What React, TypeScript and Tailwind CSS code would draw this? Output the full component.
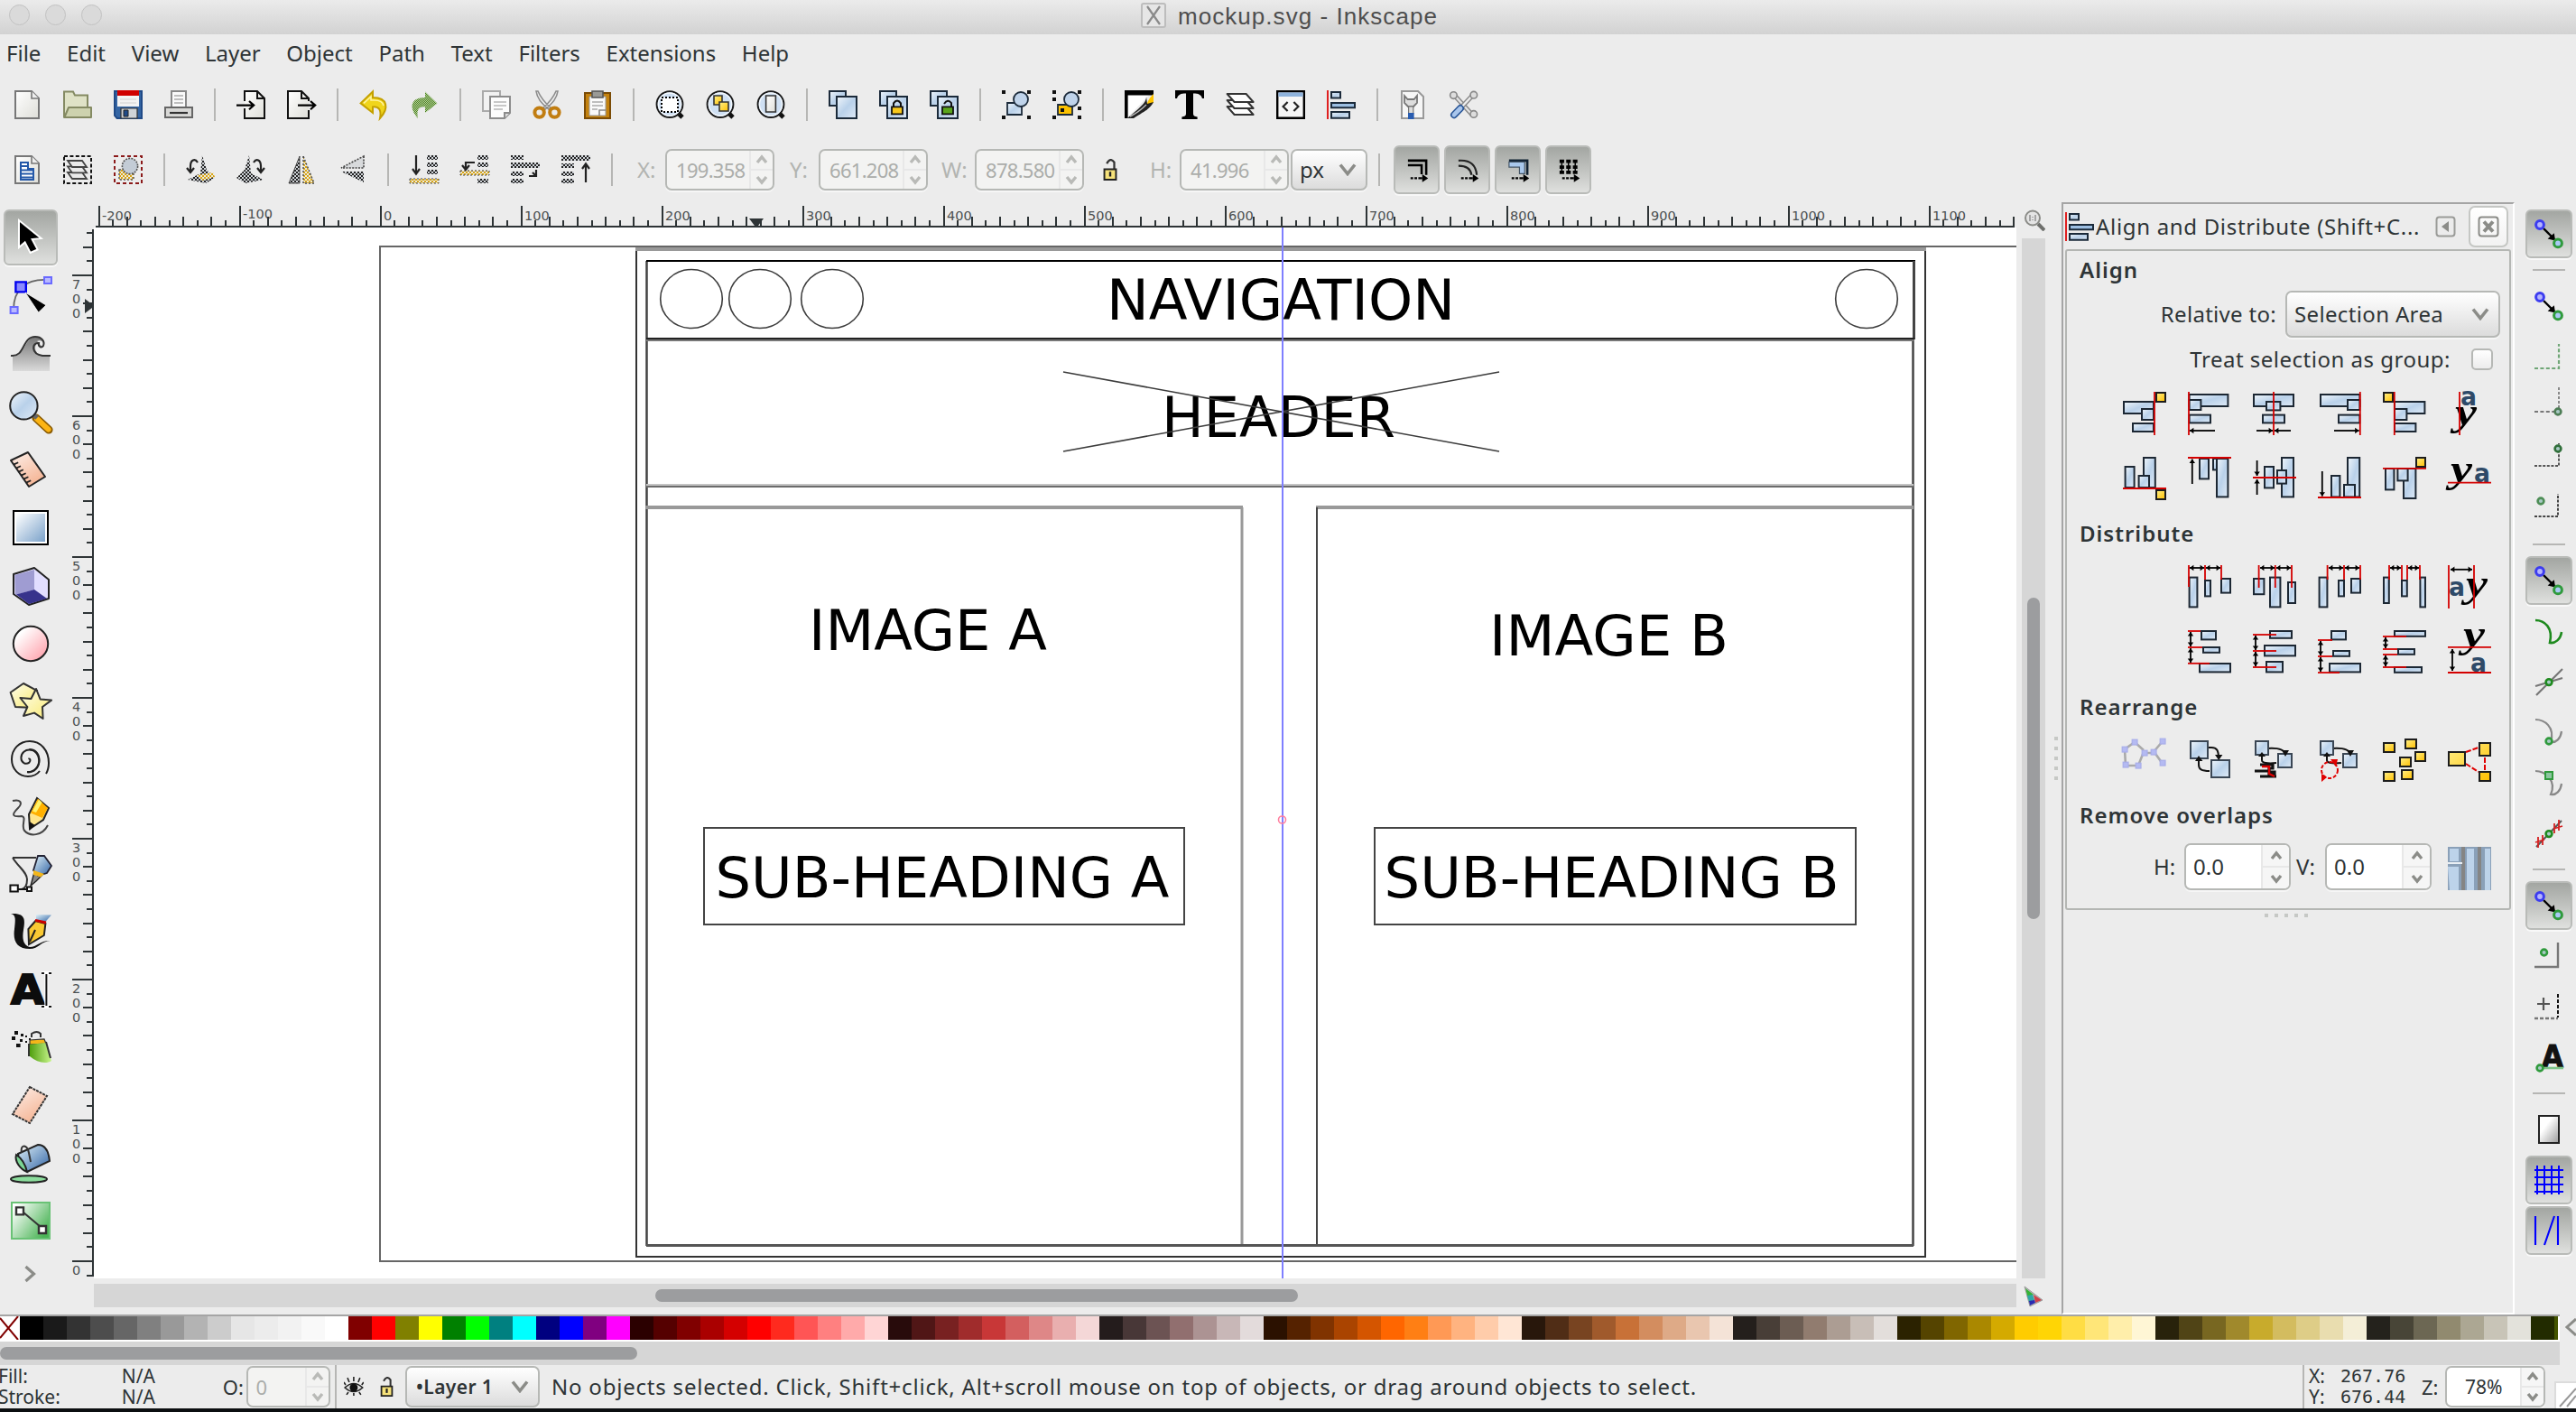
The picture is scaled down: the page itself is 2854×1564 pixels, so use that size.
import React from "react";

type Kids = { children?: React.ReactNode };

/* ---------- shared svg definitions ---------- */

function Defs() {
  return (
    <svg width="0" height="0" className="absolute">
      <defs>
        <linearGradient id="blue" x1="0" y1="0" x2="1" y2="1">
          <stop offset="0" stopColor="#f0f6fb" />
          <stop offset=".5" stopColor="#b9d1ea" />
          <stop offset="1" stopColor="#dfeaf6" />
        </linearGradient>
        <linearGradient id="rectg" x1="0" y1="0" x2="1" y2="1">
          <stop offset="0" stopColor="#ffffff" />
          <stop offset="1" stopColor="#7ba2ca" />
        </linearGradient>
        <linearGradient id="pink" x1="0" y1="0" x2="1" y2="1">
          <stop offset=".2" stopColor="#ffffff" />
          <stop offset="1" stopColor="#ff97a3" />
        </linearGradient>
        <linearGradient id="peach" x1="0" y1="0" x2=".6" y2="1">
          <stop offset="0" stopColor="#fdf0ea" />
          <stop offset="1" stopColor="#f5b595" />
        </linearGradient>
        <linearGradient id="gold" x1="0" y1="0" x2="1" y2="1">
          <stop offset="0" stopColor="#fff08a" />
          <stop offset="1" stopColor="#ffbf00" />
        </linearGradient>
        <linearGradient id="yel" x1="0" y1="0" x2="1" y2="1">
          <stop offset="0" stopColor="#fffff0" />
          <stop offset="1" stopColor="#f8e86e" />
        </linearGradient>
        <linearGradient id="paper" x1="0" y1="0" x2="1" y2="1">
          <stop offset="0" stopColor="#ffffff" />
          <stop offset="1" stopColor="#deded8" />
        </linearGradient>
        <linearGradient id="gry" x1="0" y1="0" x2="0" y2="1">
          <stop offset="0" stopColor="#777" />
          <stop offset="1" stopColor="#dadada" />
        </linearGradient>
        <linearGradient id="can" x1="0" y1="0" x2="1" y2="1">
          <stop offset="0" stopColor="#dff1f8" />
          <stop offset="1" stopColor="#2f62a4" />
        </linearGradient>
        <linearGradient id="grn" x1="0" y1="0" x2="1" y2="0">
          <stop offset="0" stopColor="#4c9c0a" />
          <stop offset="1" stopColor="#c8f58c" />
        </linearGradient>
        <linearGradient id="grad" x1="0" y1="0" x2="1" y2=".7">
          <stop offset=".1" stopColor="#ffffff" />
          <stop offset="1" stopColor="#4bb456" />
        </linearGradient>
        <linearGradient id="pageg" x1="0" y1="0" x2="1" y2="1">
          <stop offset=".35" stopColor="#fff" />
          <stop offset="1" stopColor="#9a9a9a" />
        </linearGradient>
        <pattern id="chk" width="2" height="2" patternUnits="userSpaceOnUse">
          <rect width="1" height="1" fill="#222" />
          <rect x="1" y="1" width="1" height="1" fill="#222" />
          <rect x="1" width="1" height="1" fill="#cfd3d8" />
          <rect y="1" width="1" height="1" fill="#cfd3d8" />
        </pattern>
        <pattern id="chkg" width="1" height="1" patternUnits="userSpaceOnUse">
          <rect width=".5" height=".5" fill="#4d7c1e" />
          <rect x=".5" y=".5" width=".5" height=".5" fill="#4d7c1e" />
          <rect x=".5" width=".5" height=".5" fill="#b5d6a0" />
          <rect y=".5" width=".5" height=".5" fill="#b5d6a0" />
        </pattern>
        <pattern id="chky" width="2" height="2" patternUnits="userSpaceOnUse">
          <rect width="1" height="1" fill="#d9a514" />
          <rect x="1" y="1" width="1" height="1" fill="#d9a514" />
          <rect x="1" width="1" height="1" fill="#eceae0" />
          <rect y="1" width="1" height="1" fill="#eceae0" />
        </pattern>
      </defs>
    </svg>
  );
}

function I16({ children }: Kids) {
  return (
    <svg viewBox="0 0 16 16" className="h-8 w-8 overflow-visible" fill="none">
      {children}
    </svg>
  );
}

function I24({ children }: Kids) {
  return (
    <svg viewBox="0 0 24 24" className="h-12 w-12 overflow-visible" fill="none">
      {children}
    </svg>
  );
}

/* ---------- command bar icons ---------- */

const Page = ({ stroke = "#777", x = 0 }) => (
  <>
    <path d={`M${x + 1.5} .5h9l4 4v11h-13z`} fill="url(#paper)" stroke={stroke} />
    <path d={`M${x + 10.5} .5v4h4`} fill="#eee" stroke={stroke} strokeWidth=".8" />
  </>
);

const Glass = ({ children }: Kids) => (
  <I16>
    <path d="M12 12l3 3" stroke="#111" strokeWidth="2.4" />
    <circle cx="8" cy="7.8" r="7.2" fill="#cfe0f3" stroke="#1a1a1a" />
    <circle cx="8" cy="7.8" r="6.3" stroke="#f2f7fc" strokeWidth=".7" />
    {children}
  </I16>
);

const Corners = () => (
  <path d="M0 0h2v2H0zM14 0h2v2h-2zM0 14h2v2H0zM14 14h2v2h-2z" fill="#111" />
);

const row1: (React.ReactNode | null)[] = [
  <I16><Page /></I16>,
  <I16>
    <path d="M.5 14.8v-14h5l1 2h7v12z" fill="#dfe2c6" stroke="#848a62" />
    <path d="M3 9.500h12.500v5.500H.7z" fill="#cdd2ae" stroke="#848a62" strokeLinejoin="round" />
  </I16>,
  <I16>
    <path d="M.5 .5h15v15H1.8L.5 14z" fill="#3465a4" stroke="#204a87" />
    <path d="M2 0h12v3H2z" fill="#d00000" />
    <path d="M2 3h12v6H2z" fill="#f3f3f3" />
    <path d="M3.500 5h9M3.500 7h9" stroke="#ddd" strokeWidth=".7" />
    <path d="M4 10h9v5.500H4z" fill="#d0d4d8" stroke="#333" strokeWidth=".6" />
    <path d="M5.500 11h2.500v3.500H5.500z" fill="#204a87" stroke="#222" strokeWidth=".5" />
  </I16>,
  <I16>
    <path d="M4 .5h8v9H4z" fill="#fafafa" stroke="#888" />
    <path d="M5.500 3h5M5.500 5h5M5.500 7h5" stroke="#aaa" strokeWidth=".8" />
    <path d="M.5 9.500h15v5.500H.5z" fill="#d8d8d6" stroke="#666" />
    <path d="M3 12.500h10" stroke="#333" strokeWidth="1.100" />
  </I16>,
  null,
  <I16>
    <path d="M4.500 6V.5h7l4 4v11h-11V10" fill="url(#paper)" stroke="#111" />
    <path d="M11.500 .5v4h4" stroke="#111" />
    <path d="M0 8.300h9M7 6l2.600 2.300L7 10.600" stroke="#000" strokeWidth="1.100" />
  </I16>,
  <I16>
    <path d="M12 6V4.500l-4-4H.5v15H12V11" fill="url(#paper)" stroke="#111" />
    <path d="M8 .5v4h4" stroke="#111" />
    <path d="M6 8.300h9.500M13 6l2.600 2.300L13 10.600" stroke="#000" strokeWidth="1.100" />
  </I16>,
  null,
  <I16>
    <path d="M7.500.7L.8 7.200l6.700 5.300V9.200c3-.2 5 1 4 6.300 5-5.500 4.500-11.500-4-11.500z" fill="#f0d51c" stroke="#c4a000" />
    <path d="M2.500 7.200l4-3.700v2h2c3 0 4.500 1 5 3" stroke="#fff3a0" strokeWidth=".8" />
  </I16>,
  <I16>
    <path d="M8.500.7l6.700 6.500-6.700 5.300V9.200c-3-.2-5 1-4 6.300C-.5 10 0 4 8.500 4z" fill="url(#chkg)" />
  </I16>,
  null,
  <I16>
    <path d="M.5 .5h9.500v11H.5z" fill="#f2f2f2" stroke="#aaa" />
    <path d="M4.500 3.500h11v9l-3 3h-8z" fill="#fcfcfc" stroke="#8c8c8c" />
    <path d="M6.500 6.500h7M6.500 8.500h7M6.500 10.500h5" stroke="#b5b5b5" strokeWidth=".8" />
    <path d="M12.500 15.500v-3h3" fill="#ddd" stroke="#8c8c8c" />
  </I16>,
  <I16>
    <path d="M2 .5c.5 4 3 7 7 10l1-1C7 7 4.500 4 3 .5zM14 .5c-.5 4-3 7-7 10l-1-1c3-2.500 5.500-5.500 7-9z" fill="#eee" stroke="#8c8c8c" strokeWidth=".8" />
    <circle cx="3.800" cy="12.300" r="2.600" stroke="#c17d11" strokeWidth="2" />
    <circle cx="12.200" cy="12.300" r="2.600" stroke="#c17d11" strokeWidth="2" />
  </I16>,
  <I16>
    <path d="M1 1.500h14v14H1z" fill="#c4820e" stroke="#7a4b05" />
    <path d="M3.500 3.500h9v10.500h-9z" fill="#fafafa" stroke="#999" strokeWidth=".5" />
    <path d="M5 .5h6V4H5z" fill="#9a9a96" stroke="#555" strokeWidth=".8" />
    <path d="M5 6.500h6M5 8.500h6M5 10.500h3" stroke="#aaa" strokeWidth=".8" />
    <path d="M9 14v-3h3.500" stroke="#888" strokeWidth=".8" />
  </I16>,
  null,
  <Glass><path d="M3.500 4h9v8h-9z" fill="#fff" stroke="#000" strokeDasharray="1 1" /></Glass>,
  <Glass>
    <path d="M4.500 3h4.500v5H4.500z" fill="url(#gold)" stroke="#333" strokeWidth=".8" />
    <path d="M7.500 6.500h5v5h-5z" fill="url(#gold)" stroke="#333" strokeWidth=".8" />
  </Glass>,
  <Glass><path d="M5.300 3h5.400v9H5.300z" fill="url(#paper)" stroke="#333" strokeWidth=".8" /></Glass>,
  null,
  <I16>
    <path d="M.5 .5h9v8h-9z" fill="url(#blue)" stroke="#1b2a3a" />
    <path d="M4.500 3.500h11v12h-11z" fill="url(#blue)" stroke="#1b2a3a" />
  </I16>,
  <I16>
    <path d="M.5 .5h9v8h-9z" fill="url(#blue)" stroke="#1b2a3a" />
    <path d="M4.500 3.500h11v12h-11z" fill="url(#blue)" stroke="#1b2a3a" />
    <path d="M8 9V7.200q2-3 4 0V9" stroke="#111" strokeWidth="1" />
    <path d="M7 9.200h6v4H7z" fill="#f8c81c" stroke="#111" strokeWidth=".9" />
  </I16>,
  <I16>
    <path d="M.5 .5h9v8h-9z" fill="url(#blue)" stroke="#1b2a3a" />
    <path d="M4.500 3.500h11v12h-11z" fill="url(#blue)" stroke="#1b2a3a" />
    <path d="M8 7.500q2-3 4-.5V9" stroke="#111" strokeWidth="1" />
    <path d="M7 9.200h6v4H7z" fill="#5aa51c" stroke="#111" strokeWidth=".9" />
  </I16>,
  null,
  <I16>
    <Corners />
    <path d="M3 7h8v6.500H3z" fill="url(#blue)" stroke="#1b2a3a" strokeWidth=".9" />
    <circle cx="10.500" cy="5" r="4" fill="#bfd3ea" stroke="#1b2a3a" strokeWidth=".9" />
  </I16>,
  <I16>
    <Corners />
    <path d="M0 4h2v2H0zM14 9h2v2h-2z" fill="#111" />
    <path d="M3 8h8v5.500H3z" fill="#fcc200" stroke="#1b2a3a" strokeWidth=".9" />
    <circle cx="10.500" cy="5" r="4" fill="#bfd3ea" stroke="#1b2a3a" strokeWidth=".9" />
    <path d="M4.500 10h2v2h-2z" fill="#111" />
  </I16>,
  null,
  <I16>
    <path d="M1 1h14L1.500 15.300H1z" fill="#fff" />
    <path d="M0 0h16v2.800H1.800v12.700H0z" fill="#000" />
    <path d="M16 2v5l-4 1.500c1-3 2-4.500 4-6.500z" fill="#ffc400" />
    <path d="M12 3.500c0 3-2 5-10.500 12H5c6-4 9-5 11-9l-3.500 1z" fill="#222" />
    <path d="M12 8c-3 3-5 4.500-9 6.500" stroke="#bbb" strokeWidth=".7" />
  </I16>,
  <I16><path d="M0 0h16v4.500h-1C14.300 2.300 13 1.700 10 1.700V13c0 1.200.8 1.600 2.300 1.700V16H3.700v-1.300C5.200 14.600 6 14.200 6 13V1.700c-3 0-4.300.6-5 2.800H0z" fill="#000" /></I16>,
  <I16>
    {[9, 5.500, 2].map((y) => (
      <path key={y} d={`M.8 ${y}h10.500l4 4.500H4.800z`} fill="#fdfdfd" stroke="#333" strokeLinejoin="round" />
    ))}
  </I16>,
  <I16>
    <path d="M.6 .6h14.800v14.800H.6z" fill="#f6f6f6" stroke="#000" strokeWidth="1.200" />
    <path d="M1.200 1.200h13.600v2.300H1.200z" fill="#8fb3dc" />
    <path d="M6.300 6.500L3.800 9l2.500 2.500M9.700 6.500L12.200 9l-2.500 2.500" stroke="#222" strokeWidth="1.100" />
  </I16>,
  <AlignSmall />,
  null,
  <I16>
    <path d="M1.500 .5h9l3 3v12h-12z" fill="#f6f6f6" stroke="#999" />
    <path d="M3 3v4l2 2h3l2-2V3L8.300 5H4.800z" fill="#ddd" stroke="#777" strokeWidth=".9" />
    <path d="M5.300 9h2.600v4H5.300z" fill="#ddd" stroke="#777" strokeWidth=".6" />
    <path d="M5 12.500h3.300V16H5z" fill="#2a5db0" />
  </I16>,
  <I16>
    <path d="M1.500 1.500l11 12" stroke="#888" strokeWidth="2.600" />
    <path d="M1.500 1.500l11 12" stroke="#e4e4e4" strokeWidth="1.200" />
    <path d="M14 1.500L6 10" stroke="#888" strokeWidth="2.600" />
    <path d="M14 1.500L6 10" stroke="#eee" strokeWidth="1.200" />
    <circle cx="13.400" cy="2.600" r="1.900" fill="#ddd" stroke="#888" strokeWidth=".8" />
    <path d="M6 10L2.500 13.600" stroke="#2b5797" strokeWidth="4" strokeLinecap="round" />
    <path d="M6 10L2.500 13.600" stroke="#a9c6ec" strokeWidth="2.400" strokeLinecap="round" />
    <circle cx="2.200" cy="2.800" r="1.900" fill="#ddd" stroke="#888" strokeWidth=".8" />
    <circle cx="13.400" cy="13.200" r="1.900" fill="#ddd" stroke="#888" strokeWidth=".8" />
  </I16>,
];

function AlignSmall() {
  return (
    <I16>
      <path d="M.5 0v16" stroke="#e02020" strokeWidth="1" />
      <path d="M2.500 1h5v3.300h-5z" fill="url(#blue)" stroke="#1b2a3a" />
      <path d="M2.500 7h13v2.600h-13z" fill="#9dbfe2" stroke="#1b2a3a" />
      <path d="M2.500 12h10v3.400h-10z" fill="url(#blue)" stroke="#1b2a3a" />
    </I16>
  );
}

const Sheet = ({ y, w = 6 }: { y: number; w?: number }) => (
  <rect x="9.500" y={y} width={w} height="2.500" fill="url(#chk)" />
);

const row2: (React.ReactNode | null)[] = [
  <I16>
    <Page />
    <path d="M4.500 4h4v3.500h3v6h-7z" fill="#fff" stroke="#2458a8" strokeWidth="1" />
    <path d="M5 6h3M5 8.200h6M5 10.200h6M5 12.200h6" stroke="#2458a8" strokeWidth="1" />
  </I16>,
  <I16>
    <path d="M.5 .5h15v15H.5z" stroke="#111" strokeDasharray="2 1.200" />
    {[9.500, 6.200, 3].map((y) => (
      <path key={y} d={`M2.500 ${y}h8l2.500 3.500H5z`} fill="#eaeaea" stroke="#444" strokeWidth=".9" />
    ))}
  </I16>,
  <I16>
    <path d="M.5 .5h15v15H.5z" stroke="#8b1a1a" strokeDasharray="2 1.500" />
    <path d="M3 8h8v5.500H3z" fill="url(#chky)" stroke="#555" strokeWidth=".7" strokeDasharray="1 1" />
    <circle cx="9" cy="6" r="4.300" fill="#c3ccd6" stroke="#555" strokeWidth=".8" strokeDasharray="1 .6" />
  </I16>,
  null,
  <I16>
    <path d="M9 0l2.500 8 4.500 4.500-5 3L1 13.500l7-3.500z" fill="url(#chk)" />
    <path d="M6 11l9-1.500 1 2.500-7 2z" fill="url(#chky)" />
    <path d="M6.500 4C5 1.500 2.500 2.500 2.500 6v3M.5 7l2 2.500L4.500 7" stroke="#222" strokeWidth="1.100" />
  </I16>,
  <I16>
    <path d="M7 0L4.500 8 0 12.500l5 3 10-2L8 10z" fill="url(#chk)" />
    <path d="M9.500 4c1.500-2.500 4-1.500 4 2v3M11.500 7l2 2.500 2-2.500" stroke="#222" strokeWidth="1.100" />
  </I16>,
  <I16>
    <path d="M7 .5v15H1z" fill="url(#chk)" stroke="#444" strokeWidth=".5" />
    <path d="M9 .5v15h6z" fill="url(#chky)" stroke="#444" strokeWidth=".7" strokeDasharray="1 1" />
  </I16>,
  <I16>
    <path d="M14.500 .5v6.500H2z" fill="#d8dadc" stroke="#444" strokeWidth=".8" strokeDasharray="1 .7" />
    <path d="M14.500 15v-6H2z" fill="url(#chk)" />
  </I16>,
  null,
  <I16>
    <Sheet y={0} /><Sheet y={4} /><Sheet y={8} />
    <rect x="0" y="13" width="16" height="2.500" fill="url(#chky)" stroke="#444" strokeWidth=".5" strokeDasharray="1 1" />
    <path d="M3.500 0v10M1.500 7.500l2 2.800 2-2.800" stroke="#222" strokeWidth="1.100" />
  </I16>,
  <I16>
    <Sheet y={0} /><Sheet y={4} /><Sheet y={13} />
    <rect x="0" y="8.500" width="16" height="2.500" fill="url(#chky)" stroke="#444" strokeWidth=".5" strokeDasharray="1 1" />
    <path d="M8 4H3v4M1 5.500L3 8l2-2.500" stroke="#222" strokeWidth="1.100" />
  </I16>,
  <I16>
    <rect y="0" width="7" height="2.500" fill="url(#chk)" /><rect y="9" width="7" height="2.500" fill="url(#chk)" /><rect y="13" width="7" height="2.500" fill="url(#chk)" />
    <rect x="0" y="4" width="16" height="3" fill="url(#chk)" />
    <path d="M14 8v3.500h-4M12 9.500l2 2" stroke="#222" strokeWidth="1.100" />
  </I16>,
  <I16>
    <rect x="0" y="0" width="16" height="3" fill="url(#chk)" />
    <rect y="4.500" width="7" height="2.500" fill="url(#chk)" /><rect y="9" width="7" height="2.500" fill="url(#chk)" /><rect y="13" width="7" height="2.500" fill="url(#chk)" />
    <path d="M13.500 15V5M11.500 7.500l2-2.800 2 2.800" stroke="#222" strokeWidth="1.100" />
  </I16>,
  null,
];

function Toolbar({ items }: { items: (React.ReactNode | null)[] }) {
  return (
    <>
      {items.map((it, i) =>
        it === null ? (
          <div key={i} className="flex w-6 shrink-0 justify-center">
            <div className="h-9 w-0.5 bg-[#b6b6b4]" />
          </div>
        ) : (
          <div key={i} className="flex w-14 shrink-0 justify-center">{it}</div>
        )
      )}
    </>
  );
}

/* ---------- widgets ---------- */

function Spin({ value, size, disabled, btn = "w-[26px]", pad = "pl-2.5" }: { value: string; size: string; disabled?: boolean; btn?: string; pad?: string }) {
  const c = disabled ? "#b9bab7" : "#8b8c88";
  return (
    <div className={`flex shrink-0 overflow-hidden rounded-[7px] border-2 border-[#b6b8b5] shadow-[0_2px_0_#f6f6f6] ${size} ${disabled ? "bg-[#f3f3f2] text-[#abadaa]" : "bg-white text-[#2e3436]"}`}>
      <div className={`flex min-w-0 flex-1 items-center whitespace-nowrap ${pad}`}>{value}</div>
      <div className={`flex flex-col border-l-2 border-[#e8e8e8] ${btn} ${disabled ? "" : "bg-[#f6f6f6]"}`}>
        {["M3 9l5-6 5 6", "M3 3l5 6 5-6"].map((d, i) => (
          <div key={i} className={`flex flex-1 items-center justify-center ${i ? "border-t-2 border-[#e8e8e8]" : ""}`}>
            <svg viewBox="0 0 16 12" className="h-3 w-4" fill="none"><path d={d} stroke={c} strokeWidth="3.400" /></svg>
          </div>
        ))}
      </div>
    </div>
  );
}

function Combo({ children, size }: Kids & { size: string }) {
  return (
    <div className={`flex shrink-0 items-center justify-between rounded-[7px] border-2 border-[#b6b8b5] bg-linear-to-b from-white to-[#dcdcdc] shadow-[0_2px_0_#f6f6f6] ${size}`}>
      {children}
      <svg viewBox="0 0 20 14" className="h-3.5 w-5" fill="none"><path d="M2 1.500l8 10 8-10" stroke="#8b8c88" strokeWidth="3.600" /></svg>
    </div>
  );
}

const pressed = "bg-linear-to-b from-[#a3a6a2] to-[#dfe0de] border-2 border-[#b9bbb8] rounded-[6px] shadow-[0_2px_0_#f8f8f8]";

function Lock({ size }: { size: string }) {
  return (
    <svg viewBox="0 0 10 16" className={size} fill="none">
      <path d="M2.500 3.500Q5-1.500 8 2.500V8" stroke="#333" strokeWidth="1.500" />
      <path d="M.7 7.700h8.600v7.600H.7z" fill="#f6e27a" stroke="#222" strokeWidth="1.300" />
      <path d="M5 9.500v3.500" stroke="#222" strokeWidth="1.600" />
    </svg>
  );
}

/* ---------- toolbox ---------- */

const tools: React.ReactNode[] = [
  <I24><path d="M5.500 2.500v15l3.300-2.800 3 5.800 4-1.800-3-5.700 5-.5z" fill="#000" stroke="#fff" /></I24>,
  <I24>
    <path d="M2.500 19C2.500 8 9 2 21 2.500" stroke="#666" strokeWidth=".9" />
    <path d="M.8 17.500h4v3.500h-4zM19.500 1h4v3.500h-4z" fill="#b9b9ff" stroke="#6a6aff" />
    <path d="M3.700 3.700h5.700v5.500H3.700z" fill="#8a8aff" stroke="#0000ee" strokeWidth="1.200" />
    <path d="M9 9.500l11.500 7-4.200 4z" fill="#000" stroke="#fff" strokeWidth=".4" />
  </I24>,
  <I24>
    <path d="M2 12.500c7 1 6-10 13-10.500 3 0 5 2 4.500 4.500-1 2-3 1-2.500-1-3-1-4 6 1.500 7h4v8.500h-20.500z" fill="url(#gry)" />
    <path d="M15.500 4.500c2-1 4 .5 3.500 2-.8 1-2 .3-2-1z" fill="#ececec" />
    <path d="M1 12.500c8 1 6-10.500 13.500-10.500 3.500 0 5.500 2.500 4.500 5-1 1.500-3 .5-2.500-1.500-4-.5-4.500 6 2 7H23" stroke="#333" />
  </I24>,
  <I24>
    <path d="M15 15l7 6.500" stroke="#8a5a00" strokeWidth="4.600" strokeLinecap="round" />
    <path d="M15.500 15.500l6.300 5.800" stroke="#fcb414" strokeWidth="3" strokeLinecap="round" />
    <path d="M13 12.500l2.500 2.500" stroke="#666" strokeWidth="2.500" />
    <circle cx="8.200" cy="8.200" r="7.600" fill="url(#blue)" stroke="#222" />
  </I24>,
  <I24>
    <path d="M1 6l9.500-4.500L20 15l-9 5.500z" fill="url(#peach)" stroke="#222" strokeLinejoin="round" transform="translate(0 .5)" />
    <path d="M2.500 8.800l2.600-1.200M3.900 10.800l2.600-1.200M5.300 12.800l2.600-1.200M6.700 14.800l2.600-1.200M8.100 16.800l2.600-1.200M9.500 18.800l2.600-1.200" stroke="#222" strokeWidth=".9" />
  </I24>,
  <I24>
    <path d="M2.500 2.500h19v18.500h-19z" fill="#fff" stroke="#000" />
    <path d="M4 4h16v15.500H4z" fill="url(#rectg)" />
  </I24>,
  <I24>
    <path d="M2.500 5.500L14 2l8 6.500V19L11 22.500l-8.500-6z" fill="#e3dffb" stroke="#222" strokeLinejoin="round" />
    <path d="M3.200 6L14 3v11L3.500 17z" fill="#9f9cd2" />
    <path d="M14 3l7.300 6v9.500L14 14z" fill="#e2deff" />
    <path d="M4 16.700L14 14l7 5-10 3z" fill="#37338c" />
  </I24>,
  <I24><ellipse cx="12" cy="12" rx="9.600" ry="9.600" fill="url(#pink)" stroke="#222" /></I24>,
  <I24>
    <path d="M.8 7L8 2l7.500 4-2 9.500-10-.5z" fill="url(#yel)" stroke="#333" strokeLinejoin="round" />
    <path d="M15 5l2.300 5.700 6.200.6-5 3.700.3 6.500-4.800-3.200-6 1.700 2.200-5-4-5 6 .5z" fill="url(#yel)" stroke="#333" strokeLinejoin="round" />
  </I24>,
  <I24><path d="M11.500 11c1-.5 1.500 1 .5 2-2 1.500-4.500 0-4.500-2.500C7.500 7.500 10 6 12 6c3.500 0 5.500 3 5.500 6 0 4-3 6.500-6.500 6.500" transform="translate(-.8 .8)" stroke="#222" /><path d="M10.200 19.300M16.700 12.500c0-4-2.500-6-5.500-6M10 19c4 .3 6.700-3 6.700-6.500M10.200 19.300" stroke="#222" /><path d="M20.500 20c1.200-2 1.500-4 1.500-6C22 7 17.500 2 11.500 2 5.500 2 1.500 6.500 1.500 12c0 5.500 4 9.500 9 9.500 3 0 5-1 6.500-3" stroke="#222" /></I24>,
  <I24>
    <path d="M2 3c4-1 6 1 3 4-4 4-3 5 2 4.500 3 .5-.5 5 1.500 8 3 3.500 10 3 13-3" stroke="#444" />
    <path d="M11.500 18.500l-.5-8L15.500 1.500 22 7l-3 6.500z" fill="#ffe58a" stroke="#222" />
    <path d="M12 9.700l4-8 5.500 5.300-3 5.500z" fill="#ffb000" />
    <path d="M13 8.700l3.500-6.500 1.800 1.700L15 9.500z" fill="#fff36b" />
    <path d="M11.300 14.500l3 2-3 3z" fill="#111" />
  </I24>,
  <I24>
    <path d="M2 2.500h13M2 2.500c3 5 8 8 8 12 0 3-1 5-3 5.500" stroke="#333" />
    <path d="M4 20h7" stroke="#111" />
    <path d="M.7 17.700h4.200v3.500H.7zM10 18.800h2.500v2.200H10z" fill="#fff" stroke="#111" />
    <path d="M14 10.500L12 18l3-2.500 3-3z" fill="#888" stroke="#222" strokeWidth=".7" />
    <path d="M13.500 9.500L16 1.500h3.500L23.500 7l-2.500 4-5 1.500z" fill="url(#can)" stroke="#223" strokeWidth=".9" />
    <path d="M13.500 9.500l6 2-2 1.800-4-1.300z" fill="#f3b61a" />
  </I24>,
  <I24>
    <path d="M1 1.500c8-.5 8 3 7 9s.5 8.500 3.500 9.500c4 0 6-4 12-3.500-5-.5-7 4.500-12 4.500-7 0-9.500-4-8.500-11C3.500 5 4 2 1 1.500z" fill="#111" />
    <path d="M11 18.500l-.3-8.500 4-4.500 5.500 1.500-.8 6.500z" fill="#f9c933" stroke="#222" />
    <path d="M11.500 17l3-6.500" stroke="#222" />
    <path d="M15 2l8.500.2-3.500 4-5-1z" fill="url(#can)" />
    <path d="M14.500 5.200l6 1.300" stroke="#c00" strokeWidth="1.500" />
  </I24>,
  <I24>
    <text x="1" y="19.500" fontFamily="DejaVu Sans, sans-serif" fontWeight="bold" fontSize="22.500" fill="#0c0c0c" stroke="#0c0c0c" strokeWidth="1" textLength="18.500" lengthAdjust="spacingAndGlyphs">A</text>
    <path d="M18 2.500h5.500M20.700 3v17.500M18 21h5.500" stroke="#fff" strokeWidth="2" />
    <path d="M18 2.500h1.500M22 2.500h1.500M20.700 3v17.500M18 21h1.500M22 21h1.500" stroke="#111" />
  </I24>,
  <I24>
    <path d="M3 2.500h2v2H3zM1.500 5.500h2v2h-2zM4 9.500h2.300v2H4zM6.500 4h1.500v1.500H6.500zM6 7h1.500v1.500H6zM9 5h1v1H9zM9 8h1v1H9zM11 6.500h1v1h-1z" fill="#111" />
    <path d="M12.500 6V4q3-2 5 0v2" stroke="#333" />
    <path d="M11.500 7.500l8-.5 1 2.500-9 .5z" fill="#f3b61a" stroke="#333" strokeWidth=".6" />
    <path d="M11 10l9.500-1 3 10c-3 2-8 1-12-2.500z" fill="url(#grn)" />
    <path d="M20.500 8.500l2.500 9M11 9.500v7" stroke="#333" />
  </I24>,
  <I24><path d="M11.500 1.500L21 6.500 11.500 21.500 2 16.500z" fill="url(#peach)" stroke="#333" strokeDasharray="1.500 .5" /></I24>,
  <I24>
    <path d="M5 6.500L16 1.500c4 0 6 4 6.500 9L10 16.500C7 14 5 10 5 6.500z" fill="url(#can)" stroke="#222" />
    <path d="M4 7c3 2 5 5 6 9.500-4-1.500-7-6-6-9.500z" fill="#7ad694" stroke="#222" />
    <path d="M7 6c-1-5 3-5 4 0l1 5" stroke="#333" />
    <ellipse cx="11" cy="20.500" rx="10" ry="1.900" fill="#8bdc9c" stroke="#222" />
  </I24>,
  <I24>
    <path d="M1.500 1.500h21v20h-21z" fill="url(#grad)" stroke="#69c275" />
    <path d="M8 7l9.500 8" stroke="#333" />
    <path d="M4 4.200h4v4H4zM16.500 14.500h4v4h-4z" fill="#fff" stroke="#333" strokeWidth="1.200" />
  </I24>,
];

/* ---------- align & distribute ---------- */

type B = [number, number, number, number];
type A = [number, number, number, number];
function Diagram({ bars = [], gold = [], red = [], arrows = [], text }: { bars?: B[]; gold?: B[]; red?: B[]; arrows?: A[]; text?: React.ReactNode }) {
  return (
    <I24>
      {bars.map(([x1, y1, x2, y2], i) => (
        <rect key={i} x={x1 + 0.5} y={y1 + 0.5} width={x2 - x1 - 1} height={y2 - y1 - 1} fill="url(#blue)" stroke="#1c2733" />
      ))}
      {gold.map(([x1, y1, x2, y2], i) => (
        <rect key={i} x={x1 + 0.5} y={y1 + 0.5} width={x2 - x1 - 1} height={y2 - y1 - 1} fill="url(#gold)" stroke="#1c1c1c" />
      ))}
      {text}
      {red.map(([x1, y1, x2, y2], i) => (
        <path key={i} d={`M${x1} ${y1}L${x2} ${y2}`} stroke="#d40000" strokeWidth=".9" />
      ))}
      {arrows.map(([x1, y1, x2, y2], i) => {
        const h = y1 === y2;
        const s = Math.sign(h ? x2 - x1 : y2 - y1);
        const head = h ? `M${x2} ${y2}l${-2.2 * s} -1.600v3.200z` : `M${x2} ${y2}l-1.600 ${-2.2 * s}h3.200z`;
        return (
          <g key={i}>
            <path d={`M${x1} ${y1}L${x2} ${y2}`} stroke="#000" strokeWidth=".9" />
            <path d={head} fill="#000" />
          </g>
        );
      })}
    </I24>
  );
}

const span = (a: number, b: number, k: number, v = false): A[] =>
  v ? [[k, (a + b) / 2, k, a], [k, (a + b) / 2, k, b]] : [[(a + b) / 2, k, a, k], [(a + b) / 2, k, b, k]];

const Ta = ({ x, y }: { x: number; y: number }) => (
  <text x={x} y={y} fontFamily="DejaVu Sans, sans-serif" fontWeight="bold" fontSize="14" fill="#2e4a68" textLength="9" lengthAdjust="spacingAndGlyphs">a</text>
);
const Ty = ({ x, y }: { x: number; y: number }) => (
  <text x={x} y={y} fontFamily="Liberation Serif, serif" fontStyle="italic" fontWeight="bold" fontSize="22" fill="#000" textLength="12" lengthAdjust="spacingAndGlyphs">y</text>
);

const alignRows: React.ReactNode[][] = [
  [
    <Diagram bars={[[0, 5, 17.5, 12.5], [10, 9, 17.5, 16], [5, 17, 17.5, 22.500]]} gold={[[18, 0, 24, 6]]} red={[[17.5, 0, 17.5, 24]]} />,
    <Diagram bars={[[0.3, 1, 22.7, 8.5], [0.3, 4, 7.7, 10.5], [0.3, 12.3, 13, 17.7]]} red={[[0.5, 0, 0.5, 24]]} arrows={[[15, 21.5, 1, 21.5]]} />,
    <Diagram bars={[[0, 1, 23, 8.5], [7, 5, 15.7, 10.7], [5, 12.3, 18, 17.7]]} red={[[11.5, 0, 11.5, 24]]} arrows={[[2, 21.5, 11, 21.5], [21, 21.5, 12, 21.5]]} />,
    <Diagram bars={[[1, 1, 23.7, 8.5], [16, 4, 23.7, 10.5], [11, 12.3, 23.7, 17.7]]} red={[[23.4, 0, 23.4, 24]]} arrows={[[9, 21.5, 22.8, 21.5]]} />,
    <Diagram bars={[[6, 5, 23.7, 12.5], [6, 9, 13.7, 16], [6, 17, 18.7, 22.5]]} gold={[[0, 0, 6, 6]]} red={[[6.4, 0, 6.4, 24]]} />,
    <Diagram text={<><Ta x={7} y={7.500} /><Ty x={4} y={18.500} /></>} red={[[6.5, 0, 6.5, 24]]} />,
  ],
  [
    <Diagram bars={[[0.8, 5, 6.8, 17.5], [11, 0, 18.4, 17.5], [8.3, 10, 15, 17.5]]} gold={[[18, 18, 24, 24]]} red={[[0, 17.5, 24, 17.5]]} />,
    <Diagram bars={[[6, 0.5, 12, 12.7], [13.5, 0.5, 19.6, 7.7], [15.5, 0.5, 22.7, 22.7]]} red={[[0, 0.5, 24, 0.5]]} arrows={[[2.4, 15, 2.4, 1.3]]} />,
    <Diagram bars={[[6, 5, 12, 17.7], [15.5, 0, 23, 22.7], [13, 7, 19, 15.3]]} red={[[0, 11.5, 24, 11.5]]} arrows={[[2.3, 2, 2.3, 10.500], [2.3, 21, 2.3, 12.500]]} />,
    <Diagram bars={[[7, 10, 12.7, 22.7], [16, 0, 23.6, 22.7], [14, 15, 21, 22.7]]} red={[[0, 22.5, 24, 22.5]]} arrows={[[2.4, 8, 2.4, 21.8]]} />,
    <Diagram bars={[[1, 6, 6.7, 18.7], [11, 6, 18.7, 23.5], [7.7, 6, 14.3, 13.7]]} gold={[[18, 0, 24, 6]]} red={[[0, 6.4, 24, 6.4]]} />,
    <Diagram text={<><Ty x={1.500} y={14.200} /><Ta x={14.500} y={13.800} /></>} red={[[0, 14.3, 24, 14.3]]} />,
  ],
];

const distRows: React.ReactNode[][] = [
  [
    <Diagram bars={[[0.3, 6.3, 5.7, 23.7], [9, 8, 13, 17.7], [18, 7, 24, 15.800]]} red={[[0.5, 0, 0.5, 12], [9.5, 0, 9.5, 8], [18.5, 0, 18.5, 8]]} arrows={[...span(1, 9, 1.5), ...span(10, 18, 1.5)]} />,
    <Diagram bars={[[0, 7, 6.700, 16.600], [9, 6.3, 15.700, 23.7], [19, 9, 24, 21.500]]} red={[[3.3, 0, 3.3, 12.5], [12.4, 0, 12.4, 12.5], [21.5, 0, 21.5, 12.5]]} arrows={[...span(4, 12, 1.5), ...span(13, 21, 1.5)]} />,
    <Diagram bars={[[0.3, 6.3, 5.7, 23.7], [11, 8, 15, 17.7], [18, 7, 24, 15.800]]} red={[[5.3, 0, 5.3, 8], [14.5, 0, 14.5, 8], [23.5, 0, 23.5, 8]]} arrows={[...span(6, 14, 1.5), ...span(15, 23, 1.5)]} />,
    <Diagram bars={[[0, 6.3, 3.900, 21.500], [10, 8, 13.900, 17.7], [20.200, 6.3, 24, 23.700]]} red={[[3.5, 0, 3.5, 8], [10.5, 0, 10.5, 8], [13.5, 0, 13.5, 8], [20.5, 0, 20.5, 8]]} arrows={[...span(4, 10, 1.5), ...span(14, 20, 1.5)]} />,
    <Diagram text={<><Ta x={0.500} y={17} /><Ty x={10} y={17.500} /></>} red={[[0.5, 0, 0.5, 24], [14.5, 0, 14.5, 24]]} arrows={span(1.500, 13.500, 2.4)} />,
  ],
  [
    <Diagram bars={[[7, 0, 16, 5.700], [8, 9, 18, 12.900], [6, 18, 24, 23.7]]} red={[[0, 0.5, 7, 0.5], [0, 9.5, 8, 9.5], [0, 18.4, 12, 18.400]]} arrows={[...span(1, 9, 1.5, true), ...span(10, 18, 1.5, true)]} />,
    <Diagram bars={[[9, 0, 22, 4.900], [6, 8, 24, 14.700], [7, 17, 17, 23.7]]} red={[[0, 2.5, 13, 2.5], [0, 11.5, 13, 11.5], [0, 20.5, 13, 20.5]]} arrows={[...span(3, 11, 1.5, true), ...span(12, 20, 1.5, true)]} />,
    <Diagram bars={[[7, 0, 16, 5.700], [8, 11, 18, 14.900], [6, 18, 24, 23.7]]} red={[[0, 5.5, 8, 5.5], [0, 14.5, 8, 14.5], [0, 23.5, 12, 23.5]]} arrows={[...span(6, 14, 1.5, true), ...span(15, 23, 1.5, true)]} />,
    <Diagram bars={[[6, 0, 24, 3.900], [8, 10, 18, 13.900], [6, 20, 22, 23.900]]} red={[[0, 3.5, 13, 3.5], [0, 10.5, 8, 10.5], [0, 13.5, 8, 13.5], [0, 20.5, 13, 20.5]]} arrows={[...span(4, 10, 1.5, true), ...span(14, 20, 1.5, true)]} />,
    <Diagram text={<><Ta x={12.500} y={23} /><Ty x={8.500} y={9.700} /></>} red={[[0, 9.4, 24, 9.4], [0, 23.5, 24, 23.5]]} arrows={span(10.500, 22.500, 2.5, true)} />,
  ],
];

const Boxes = ({ s = false }: { s?: boolean }) => (
  <>
    <path d={s ? "M8 5.500c7-.5 10 1 10 4M5 9v3c0 1.500 3 2 8 1.500" : "M10 5h3c3 0 4 1.500 4 6M6 10.500v4c0 2.500 1.500 3.500 6 3.500"} stroke="#111" />
    <rect x="1.500" y="1.500" width={s ? 7 : 9.500} height={s ? 7.500 : 9.500} fill="url(#blue)" stroke="#3a4654" />
    <rect x={s ? 14 : 13} y={s ? 8.500 : 12} width={s ? 7.500 : 10} height={s ? 7.500 : 9.500} fill="url(#blue)" stroke="#3a4654" />
    <path d={s ? "M16 6.500h4L18 10zM3 10l2-2.500L7 10z" : "M15 9h4.200l-2.100 3zM4 12.500L6 9.500l2.200 3z"} fill="#111" />
  </>
);

const rearrange: React.ReactNode[] = [
  <I24>
    <path d="M6.500 2l5 4.500M6.500 2L1 6l.5 9h7l3-7.500M11.500 8h5L22 1.500M17 7l5 7" stroke="#aaa" strokeWidth="1.300" />
    {[[6.5, 2], [1, 6], [1.5, 14.5], [8.5, 15], [12, 8], [17, 7.500], [22, 1.5], [22, 13.5]].map(([x, y], i) => (
      <rect key={i} x={x - 1.4} y={y - 1.4} width="2.900" height="2.900" fill="#b4baf2" stroke="#a8aeea" strokeWidth=".6" />
    ))}
  </I24>,
  <I24><Boxes /></I24>,
  <I24>
    <Boxes s />
    <path d="M4 14.500h7v2H9v2h3v1.500H9V21h4M1 18h8M4 21h8" stroke="#111" strokeWidth="1.600" />
    <path d="M5 15.500h4v4l3 1.500" stroke="#d00" strokeWidth="1.200" />
  </I24>,
  <I24>
    <Boxes s />
    <circle cx="6.500" cy="17.500" r="4.500" stroke="#e00000" strokeDasharray="2 1" />
    <path d="M7 11.500l4 0-1 4zM2 24l0-4.500 3 2z" fill="#e00000" />
  </I24>,
  <Diagram gold={[[0, 2, 7, 8], [12, 0, 19, 6], [17.5, 7, 24, 13], [9, 10, 16, 16], [0, 18, 7, 24], [10, 17, 17, 23]]} />,
  <I24>
    <path d="M10 7.500L17 5M10 14l7 4.500M20.500 10.500v7" stroke="#e00000" strokeDasharray="3 1" />
    <path d="M.5 7.500h9v7.500h-9zM17.500 2.500h6v7h-6zM17.500 18.500h6v5h-6z" fill="url(#gold)" stroke="#1c1c1c" />
  </I24>,
];

function IconRow({ icons, className }: { icons: React.ReactNode[]; className: string }) {
  return (
    <div className={`flex h-12 justify-end gap-6 pr-5 ${className}`}>
      {icons.map((n, i) => <React.Fragment key={i}>{n}</React.Fragment>)}
    </div>
  );
}

function Heading({ children, className = "mt-4" }: Kids & { className?: string }) {
  return <div className={`flex h-[42px] items-center pl-[14px] font-semibold tracking-[1px] ${className}`}>{children}</div>;
}

function Dock() {
  return (
    <div className="flex w-[502px] shrink-0 flex-col border-t-2 border-r-2 border-b-2 border-l-2 border-t-[#a5a5a5] border-r-white border-b-white border-l-[#a5a5a5]">
      <div className="flex h-[50px] items-center pl-0.5">
        <AlignSmall />
        <span className="ml-0.5 w-[376px] whitespace-nowrap pb-px tracking-[0.68px]">Align and Distribute (Shift+C...</span>
        <svg viewBox="0 0 24 24" className="h-6 w-6" fill="none">
          <rect x="1.500" y="1.500" width="20" height="21" rx="3" stroke="#9a9b98" strokeWidth="2" />
          <path d="M15 6v12l-8-6z" fill="#8b8c88" />
        </svg>
        <div className="ml-[13px] flex h-[46px] w-11 items-center justify-center rounded-[7px] border-2 border-[#c5c7c4] bg-linear-to-b from-white to-[#f2f2f2]">
          <svg viewBox="0 0 24 24" className="h-6 w-6" fill="none">
            <rect x="1.500" y="1.500" width="21" height="21" rx="3" stroke="#8b8c88" strokeWidth="2" />
            <path d="M7 6.500l10 11M17 6.500L7 17.500" stroke="#8b8c88" strokeWidth="4" />
          </svg>
        </div>
      </div>
      <div className="ml-0.5 h-[732px] w-[494px] rounded-[3px] border-2 border-[#b4b6b3]">
        <Heading className="">Align</Heading>
        <div className="mt-0.5 flex h-[52px] items-center justify-end pr-2.5">
          <span className="mr-2.5 tracking-[0.3px]">Relative to:</span>
          <Combo size="h-[52px] w-[238px] pl-2 pr-2.5 tracking-[0.35px]">Selection Area</Combo>
        </div>
        <div className="flex h-12 items-center justify-end pr-[18px] tracking-[0.5px]">
          Treat selection as group:
          <div className="ml-[23px] h-6 w-6 rounded-[5px] border-2 border-[#b6b8b5] bg-linear-to-b from-white to-[#ececec]" />
        </div>
        <IconRow icons={alignRows[0]} className="mt-3" />
        <IconRow icons={alignRows[1]} className="mt-6" />
        <Heading>Distribute</Heading>
        <IconRow icons={distRows[0]} className="mt-[14px]" />
        <IconRow icons={distRows[1]} className="mt-6" />
        <Heading>Rearrange</Heading>
        <IconRow icons={rearrange} className="mt-[14px]" />
        <Heading>Remove overlaps</Heading>
        <div className="mt-2.5 flex h-[52px] items-center pl-24">
          <span className="w-[34px]">H:</span>
          <Spin value="0.0" size="h-[52px] w-[118px]" btn="w-[31px]" pad="pl-2" />
          <span className="ml-1.5 w-[32px]">V:</span>
          <Spin value="0.0" size="h-[52px] w-[118px]" btn="w-[31px]" pad="pl-2" />
          <svg viewBox="0 0 24 24" className="mt-1 ml-[18px] h-12 w-12">
            <rect width="24" height="24" fill="#8aa0b8" />
            <path d="M1 1h5v7H1zM0 11h6v13H1zM10.500 1h4v23h-4zM20.500 1h3v23h-3z" fill="#bdd3ea" />
            <path d="M7.500 0h2v24h-2zM16.500 0h2v24h-2z" fill="#858585" />
            <path d="M0 9h8" stroke="#e8eef4" />
          </svg>
        </div>
      </div>
      <div className="mt-1 flex justify-center gap-[7px] pr-1">
        {[0, 1, 2, 3, 4].map((i) => <div key={i} className="h-1 w-1 bg-[#c6c8c5]" />)}
      </div>
    </div>
  );
}

/* ---------- snap bar ---------- */

const SnapArrow = () => (
  <I16>
    <path d="M5 5l6 6" stroke="#000" strokeWidth="1.200" />
    <path d="M11.500 11.800l-4.200-1 3.600-3.200z" fill="#000" />
    <circle cx="3" cy="3" r="2.200" fill="#b4b4ff" stroke="#3c3cf0" strokeWidth="1.500" />
    <circle cx="13" cy="13.200" r="2.200" fill="#a9c9f5" stroke="#2f9a3c" strokeWidth="1.500" />
  </I16>
);

const Dot = ({ x, y, c = "#2f9a3c" }: { x: number; y: number; c?: string }) => (
  <circle cx={x} cy={y} r="1.700" fill="#a9c9c5" stroke={c} strokeWidth="1.300" />
);

const snap: { kind: "on" | "off" | "sep"; icon?: React.ReactNode }[] = [
  { kind: "on", icon: <SnapArrow /> },
  { kind: "sep" },
  { kind: "off", icon: <SnapArrow /> },
  { kind: "off", icon: <I16><path d="M0 14.500h13.500V1" stroke="#6fa676" strokeDasharray="2 1.200" strokeWidth="1.100" /></I16> },
  { kind: "off", icon: <I16><path d="M0 10.500h13.500" stroke="#777" strokeDasharray="2 1.200" /><path d="M13.500-3v12" stroke="#888" strokeDasharray="1.500 1" /><Dot x={13} y={10.500} c="#4d7d55" /></I16> },
  { kind: "off", icon: <I16><path d="M0 12.500h13.500V0" stroke="#555" strokeDasharray="1.500 .8" /><Dot x={13} y={3} c="#2f6e39" /></I16> },
  { kind: "off", icon: <I16><path d="M0 12.500h13V0" stroke="#444" strokeDasharray="1.500 .8" /><Dot x={3.500} y={4} c="#4d8d55" /></I16> },
  { kind: "sep" },
  { kind: "on", icon: <SnapArrow /> },
  { kind: "off", icon: <I16><path d="M.5 2c5 0 10 4 8 12.500 3 .5 6-2 6.500-6" stroke="#1e8a1e" strokeWidth="1.300" /></I16> },
  { kind: "off", icon: <I16><path d="M1 15.500L15.500 1M.5 10.500L15.500 6" stroke="#777" strokeWidth="1.100" /><Dot x={8} y={8.300} c="#1e8a1e" /></I16> },
  { kind: "off", icon: <I16><path d="M.5 1c5 0 11 4 8.500 12.500 3 .5 5.500-2 6-6" stroke="#888" strokeWidth="1.100" /><Dot x={8} y={13} /></I16> },
  { kind: "off", icon: <I16><path d="M.5 1.500c5 0 12 5 8.500 13 3 .5 5.500-2 6-6" stroke="#888" strokeWidth="1.100" /><rect x="6" y="2" width="4" height="4" fill="#8cc5a0" stroke="#2f9a3c" /></I16> },
  { kind: "off", icon: <I16><path d="M1 15.500L15 1" stroke="#555" /><path d="M11 2.500v5.500M13.500 .5v6M2 10v6M4.500 9v5.500M10.500 5.500l5-1.500M.5 13l5-1.500" stroke="#d42020" strokeWidth=".9" /><Dot x={8} y={8.300} c="#1e8a1e" /></I16> },
  { kind: "sep" },
  { kind: "on", icon: <SnapArrow /> },
  { kind: "off", icon: <I16><path d="M0 14h13V.5" stroke="#777" strokeWidth="1.200" /><Dot x={5.300} y={6} /></I16> },
  { kind: "off", icon: <I16><path d="M0 14.500h13" stroke="#777" strokeWidth="1.200" strokeDasharray="2 1" /><path d="M13 1v13" stroke="#111" strokeDasharray="2 1" /><path d="M1.500 6.500h7M5 3v7" stroke="#555" strokeWidth="1.100" /></I16> },
  { kind: "off", icon: <I16><text x="4" y="13.500" fontFamily="DejaVu Sans, sans-serif" fontWeight="bold" fontSize="17" fill="#111" stroke="#111" strokeWidth=".5" textLength="12" lengthAdjust="spacingAndGlyphs">A</text><path d="M4 14h12" stroke="#7cc487" strokeWidth="1.300" /><Dot x={3} y={14} /></I16> },
  { kind: "sep" },
  { kind: "off", icon: <I16><rect x="2.500" y=".5" width="11" height="15" fill="url(#pageg)" stroke="#222" /></I16> },
  { kind: "on", icon: <I16><path d="M0 2.500h16M0 6.500h16M0 10.500h16M0 14.500h16M1.500 0v16M5.500 0v16M9.500 0v16M13.500 0v16" stroke="#0000ff" strokeWidth="1" /></I16> },
  { kind: "on", icon: <I16><path d="M.5 0v16M13 0v16M11 0L5.500 16" stroke="#0000ff" strokeWidth="1.050" /></I16> },
];

function SnapBar() {
  return (
    <div className="flex w-[68px] shrink-0 flex-col items-center pt-[7px] pl-2">
      {snap.map((s, i) =>
        s.kind === "sep" ? (
          <div key={i} className="flex h-[24px] w-9 shrink-0 items-center"><div className="h-0.5 w-9 bg-[#b6b6b4]" /></div>
        ) : (
          <div key={i} className="flex h-14 w-[52px] shrink-0 items-center justify-center">
            <div className={`flex h-[54px] w-[52px] items-center justify-center ${s.kind === "on" ? pressed : ""}`}>{s.icon}</div>
          </div>
        )
      )}
    </div>
  );
}

/* ---------- rulers and canvas ---------- */

function HRuler() {
  const ticks = [];
  for (let i = -20; i <= 116; i++) {
    const x = 349.5 + i * 15.6;
    if (x > 2160) break;
    const len = i % 10 === 0 ? 22 : i % 2 === 0 ? 10 : 6;
    ticks.push(<rect key={i} x={Math.round(x) - 1} y={26 - len} width="2" height={len} fill="#2e3436" />);
    if (i % 10 === 0)
      ticks.push(
        <text key={`t${i}`} x={Math.round(x) + 3} y={i === -10 ? 18 : 20} fontSize="14.500" fill="#4a4f50" fontFamily="DejaVu Sans, sans-serif">
          {i * 10}
        </text>
      );
  }
  return (
    <svg width="2162" height="28" className="block shrink-0">
      {ticks}
      <rect x="34" y="26" width="2126" height="2" fill="#2e3436" />
      <path d="M758 18h16l-6 8h-4z" fill="#2e3436" />
    </svg>
  );
}

function VRuler() {
  const ticks = [];
  for (let i = -1; i <= 73; i++) {
    const y = 1145 - i * 15.6;
    const len = i % 10 === 0 ? 22 : i % 2 === 0 ? 10 : 6;
    ticks.push(<rect key={i} x={30 - len} y={Math.round(y) - 1} width={len} height="2" fill="#2e3436" />);
    if (i % 10 === 0)
      String(i * 10).split("").forEach((d, k) =>
        ticks.push(
          <text key={`${i}-${k}`} x="8" y={Math.round(y) + 15 + k * 16} fontSize="14.500" fill="#4a4f50" fontFamily="DejaVu Sans, sans-serif">{d}</text>
        )
      );
  }
  return (
    <svg width="32" height="1164" className="block shrink-0">
      {ticks}
      <rect x="30" y="2" width="2" height="1160" fill="#2e3436" />
      <path d="M22 79v16l8-6v-4z" fill="#2e3436" />
    </svg>
  );
}

const labels: [string, number, number, number][] = [
  ["NAVIGATION", 1226, 354, 386],
  ["HEADER", 1287, 484, 259],
  ["IMAGE A", 896, 720, 264],
  ["IMAGE B", 1650, 726, 265],
  ["SUB-HEADING A", 792.5, 994, 503],
  ["SUB-HEADING B", 1533.5, 994, 504],
];

function Canvas() {
  return (
    <svg width="2130" height="1164" viewBox="104 252 2130 1164" className="block bg-white" fill="none" strokeWidth="2">
      <path d="M2234 273H421V1397H2234" stroke="#666" />
      <path d="M705 276V1392H2133V276" stroke="#333" />
      <path d="M704 276H2134" stroke="#999" strokeWidth="4" />
      <path d="M716.500 289V1380M2119.500 376V1380" stroke="#444" strokeWidth="2.500" />
      <path d="M716 289H2121V376" stroke="#000" />
      <path d="M2120.500 289V376" stroke="#444" strokeWidth="3" />
      <path d="M716 375H2121" stroke="#222" />
      <path d="M716 377H2120" stroke="#777" />
      <path d="M716 537H2120" stroke="#c4c4c4" />
      <path d="M716 539H2120" stroke="#6b6b6b" />
      <path d="M715 562H1377M1458 562H2120" stroke="#999" strokeWidth="4" />
      <path d="M1376 562V1380" stroke="#999" strokeWidth="3" />
      <path d="M1459 562V1380" stroke="#444" />
      <path d="M716 1379.500H2120" stroke="#555" strokeWidth="3" />
      {[766, 842, 922, 2068].map((cx) => <ellipse key={cx} cx={cx} cy="331" rx="34.300" ry="32.500" stroke="#3c3c3c" strokeWidth="1.600" />)}
      <path d="M780 917H1312V1024H780zM1523 917H2056V1024H1523z" stroke="#444" />
      {labels.map(([t, x, y, w]) => (
        <text key={t} x={x} y={y} fontSize="62.500" fill="#000" stroke="none" fontFamily="DejaVu Sans, sans-serif" textLength={w} lengthAdjust="spacingAndGlyphs">{t}</text>
      ))}
      <path d="M1178 412L1661 500M1178 500L1661 412" stroke="#3c3c3c" strokeWidth="1.600" />
      <path d="M1421 252V1416" stroke="#7f7fff" />
      <circle cx="1420.500" cy="908" r="4" stroke="#ff7f9f" strokeWidth="1.600" />
    </svg>
  );
}

const palette =
  "000000 1a1a1a 333333 4d4d4d 666666 808080 999999 b3b3b3 cccccc e6e6e6 ececec f2f2f2 f9f9f9 ffffff 800000 ff0000 808000 ffff00 008000 00ff00 008080 00ffff 000080 0000ff 800080 ff00ff 2b0000 550000 800000 aa0000 d40000 ff0000 ff2a1e ff5555 ff8080 ffaaaa ffd5d5 280b0b 501616 782121 a02c2c c83737 d35f5f de8787 e9afaf f4d7d7 241c1c 483737 6c5353 916f6f ac9393 c8b7b7 e3dbdb 2b1100 552200 803300 aa4400 d45500 ff6600 ff7f14 ff9955 ffb380 ffccaa ffe6d5 28170b 502d16 784421 a05a2c c87137 d38d5f deaa87 e9c6af f4e3d7 241f1c 483e37 6c5d53 917c6f ac9d93 c8beb7 e3dedb 2b2200 554400 806600 aa8800 d4aa00 ffcc00 ffd505 ffdd44 ffe678 ffeeaa fff6d5 28220b 504416 786721 a0892c c8ab2c d3bc5f decd87 e9ddaf f4eed7 24221c 484537 6c6753 918a6f aca793 c8c4b7 e3e2db 222b00".split(" ");

const snapToggles: React.ReactNode[] = [
  <><path d="M1 2h14v11M1 5.500h10.500v7" stroke="#000" strokeWidth="1.800" /></>,
  <><path d="M1 2q13-1 14 11M1 6q9 0 10 7" stroke="#222" strokeWidth="1.500" /></>,
  <><path d="M1 2h14v11" stroke="#123" strokeWidth="1.800" /><path d="M1 3h12v9H9V7H1z" fill="#a9c8ec" stroke="#456" strokeWidth=".8" /></>,
  <><path d="M1 2.500h14M1 7h14M1 11h14" stroke="#000" strokeWidth="2.600" strokeDasharray="3.500 1.600" /><path d="M2.700 2v9M7.800 2v9M13 2v9" stroke="#000" strokeWidth="1" /></>,
];

export default function App() {
  return (
    <div className="flex h-[1564px] w-[2854px] flex-col overflow-hidden bg-[#ececec] font-['Noto_Sans','Open_Sans',sans-serif] text-[24px] leading-none text-[#2e3436]">
      <Defs />
      {/* title bar */}
      <div className="flex h-[38px] shrink-0 items-center bg-linear-to-b from-[#ebebeb] to-[#d2d2d2]">
        <div className="flex w-[1264px] gap-[17px] pb-1.5 pl-2.5">
          {[0, 1, 2].map((i) => <div key={i} className="h-[23px] w-[23px] rounded-full border border-[#c2c2c2] bg-[#dadada]" />)}
        </div>
        <svg viewBox="0 0 28 28" className="mb-1 h-7 w-7">
          <rect x="1" y="1" width="26" height="26" rx="2" fill="#e6e6e6" stroke="#bdbdbd" strokeWidth="2" />
          <path d="M7 4l14 20M21 4L7 24" stroke="#8a8a8a" strokeWidth="2.200" />
        </svg>
        <span className="ml-[13px] pb-[3px] font-['Liberation_Sans',sans-serif] text-[26px] tracking-[1.05px] whitespace-nowrap text-[#4e4e4e]">mockup.svg - Inkscape</span>
      </div>
      {/* menu */}
      <div className="flex h-[42px] shrink-0 items-center gap-[28.7px] pl-[7px]">
        {["File", "Edit", "View", "Layer", "Object", "Path", "Text", "Filters", "Extensions", "Help"].map((m) => <span key={m}>{m}</span>)}
      </div>
      <div className="flex h-[72px] shrink-0 items-center pl-[2px]"><Toolbar items={row1} /></div>
      <div className="flex h-[72px] shrink-0 items-center pl-[2px]">
        <Toolbar items={row2} />
        <div className="flex items-center text-[#b2b4b1]">
          <span className="ml-4 w-[31px]">X:</span>
          <Spin value="199.358" size="h-[46px] w-[121px] text-[22px] tracking-[-0.7px]" disabled />
          <span className="ml-[17px] w-[32px]">Y:</span>
          <Spin value="661.208" size="h-[46px] w-[121px] text-[22px] tracking-[-0.7px]" disabled />
          <span className="ml-[15px] w-[37px]">W:</span>
          <Spin value="878.580" size="h-[46px] w-[121px] text-[22px] tracking-[-0.7px]" disabled />
          <div className="flex w-[73px] pl-[19px]"><Lock size="h-6 w-5" /></div>
          <span className="w-[33px]">H:</span>
          <Spin value="41.996" size="h-[46px] w-[121px] text-[22px] tracking-[-0.7px]" disabled />
        </div>
        <Combo size="ml-0.5 h-[46px] w-[85px] pl-2 pr-2.5">px</Combo>
        <div className="ml-3 h-9 w-0.5 bg-[#b6b6b4]" />
        <div className="ml-[15px] flex gap-[5px]">
          {snapToggles.map((n, i) => (
            <div key={i} className={`flex h-[54px] w-[51px] items-center justify-center ${pressed}`}>
              <svg viewBox="0 0 16 18" className="h-[26px] w-6 overflow-visible" fill="none">
                {n}
                <path d="M3 15.500h2M6 15.500h2M9 15.500h3" stroke="#000" strokeWidth="1.600" />
                <path d="M12 12.500v6l4.500-3z" fill="#000" />
              </svg>
            </div>
          ))}
        </div>
      </div>
      {/* work area */}
      <div className="flex h-[1232px] shrink-0">
        <div className="flex w-[72px] shrink-0 flex-col pt-[7px] pl-1">
          {tools.map((t, i) => (
            <div key={i} className="flex h-16 w-[60px] shrink-0 items-center justify-center">
              <div className={`flex h-[62px] w-[60px] items-center justify-center ${i === 0 ? pressed : "pt-[3px]"}`}>{t}</div>
            </div>
          ))}
          <svg viewBox="0 0 14 20" className="mt-[18px] ml-[23px] h-5 w-3.5" fill="none"><path d="M1.500 2l9 8-9 8" stroke="#8b8c88" strokeWidth="3.200" /></svg>
        </div>
        <div className="flex w-[2162px] shrink-0 flex-col">
          <HRuler />
          <div className="flex"><VRuler /><Canvas /></div>
          <div className="mt-1.5 ml-8 flex h-[26px] items-center bg-[#d6d6d6] pl-[622px]">
            <div className="h-3.5 w-[712px] rounded-full bg-[#9c9d9f]" />
          </div>
        </div>
        <div className="flex w-[38px] shrink-0 flex-col pt-2 pl-1.5">
          <svg viewBox="0 0 24 24" className="ml-0.5 h-6 w-6" fill="none">
            <circle cx="10" cy="9.500" r="8" stroke="#8b8c88" strokeWidth="2" fill="#e4e4e4" />
            <path d="M16 16l7 7" stroke="#6f706d" strokeWidth="4" />
            <path d="M7 6v7M13 6v7M10 8v1M10 11v1" stroke="#a5a5a5" strokeWidth="2" />
          </svg>
          <div className="mt-2 flex h-[1152px] w-[26px] justify-center bg-[#d6d6d6] pt-[398px]">
            <div className="h-[356px] w-3.5 rounded-full bg-[#9c9d9f]" />
          </div>
          <svg viewBox="0 0 22 24" className="mt-2 ml-0.5 h-6 w-[22px]">
            <path d="M1 1l20 15L7 23z" fill="#bcbcbc" stroke="#999" />
            <path d="M2 3l9 7-6 4z" fill="#35b335" />
            <path d="M4 11l6-1 2 6-6 2z" fill="#2fa7a7" />
            <path d="M11 10l9 6-7 3z" fill="#d0404a" />
            <path d="M6 17l6-1 1 3-6 3z" fill="#2a2ab0" />
          </svg>
        </div>
        <div className="flex w-3 shrink-0 flex-col gap-[7px] pt-[592px] pl-1">
          {[0, 1, 2, 3, 4].map((i) => <div key={i} className="h-1 w-1 bg-[#c6c8c5]" />)}
        </div>
        <Dock />
        <SnapBar />
      </div>
      {/* palette */}
      <div className="flex h-14 shrink-0">
        <div className="flex w-[2836px] shrink-0 flex-col border-t-2 border-[#a5a5a5] bg-white">
          <div className="flex h-[26px]">
            <svg viewBox="0 0 22 26" className="h-[26px] w-[22px]"><path d="M0 2l20 24M20 0L0 24" stroke="#800000" strokeWidth="2" /></svg>
            {palette.map((c, i) => <div key={i} className="h-[26px] w-[26px] shrink-0" style={{ backgroundColor: `#${c}` }} />)}
            <div className="h-[26px] w-1 bg-[#445500]" />
          </div>
          <div className="mt-0.5 flex h-[26px] items-center bg-[#d6d6d6]">
            <div className="h-3.5 w-[706px] rounded-full bg-[#9c9d9f]" />
          </div>
        </div>
        <svg viewBox="0 0 12 20" className="mt-1 ml-1.5 h-5 w-3" fill="none"><path d="M12 1L2 10l10 9" stroke="#8b8c88" strokeWidth="3" /></svg>
      </div>
      {/* status bar */}
      <div className="flex h-12 shrink-0 items-center">
        <div className="-ml-0.5 flex w-[138px] flex-col text-[21px] leading-[23px]"><span>Fill:</span><span>Stroke:</span></div>
        <div className="flex w-[113px] flex-col text-[21px] leading-[23px]"><span>N/A</span><span>N/A</span></div>
        <span className="w-[27px] text-[22px]">O:</span>
        <Spin value="0" size="h-[46px] w-[93px] text-[22px]" disabled pad="pl-2" />
        <div className="ml-[5px] h-12 w-0.5 bg-[#b6b6b4]" />
        <svg viewBox="0 0 22 22" className="ml-2 h-[22px] w-[22px]" fill="none">
          <path d="M1 12q10-9 20 0-10 9-20 0z" fill="#ddd" stroke="#222" strokeWidth="1.500" />
          <circle cx="11" cy="12" r="4.500" fill="#111" />
          <path d="M11 5V0M6 6L4 1M16 6l2-5M2 9L0 6M20 9l2-3M5 17l-2 3M17 17l2 3M11 18v3" stroke="#222" strokeWidth="1.600" />
        </svg>
        <div className="ml-4 w-[30px]"><Lock size="h-[22px] w-[19px]" /></div>
        <Combo size="h-[46px] w-[149px] pl-2.5 pr-2.5 text-[21px] font-semibold tracking-[0.4px] whitespace-nowrap">•Layer 1</Combo>
        <span className="ml-[13px] w-[1940px] shrink-0 pb-px whitespace-nowrap tracking-[0.79px]">No objects selected. Click, Shift+click, Alt+scroll mouse on top of objects, or drag around objects to select.</span>
        <div className="h-12 w-0.5 shrink-0 bg-[#b6b6b4]" />
        <div className="ml-[5px] flex w-[35px] shrink-0 flex-col text-[21px] leading-[23px]"><span>X:</span><span>Y:</span></div>
        <div className="flex w-[90px] shrink-0 flex-col font-['DejaVu_Sans_Mono',monospace] text-[20px] leading-[23px]"><span>267.76</span><span>676.44</span></div>
        <span className="w-[26px] shrink-0 text-[22px]">Z:</span>
        <Spin value="78%" size="h-[46px] w-[111px] text-[21px]" pad="pl-[20px]" />
        <div className="mt-[18px] ml-2.5 h-[30px] w-6 shrink-0 border-t-2 border-l-2 border-[#dcdcdc] bg-white">
          <svg viewBox="0 0 22 28" className="h-7 w-[22px]"><path d="M4 26L22 6M12 26l10-12" stroke="#999" strokeWidth="2" /></svg>
        </div>
      </div>
      <div className="h-1 shrink-0 bg-[#0b0e10]" />
    </div>
  );
}
